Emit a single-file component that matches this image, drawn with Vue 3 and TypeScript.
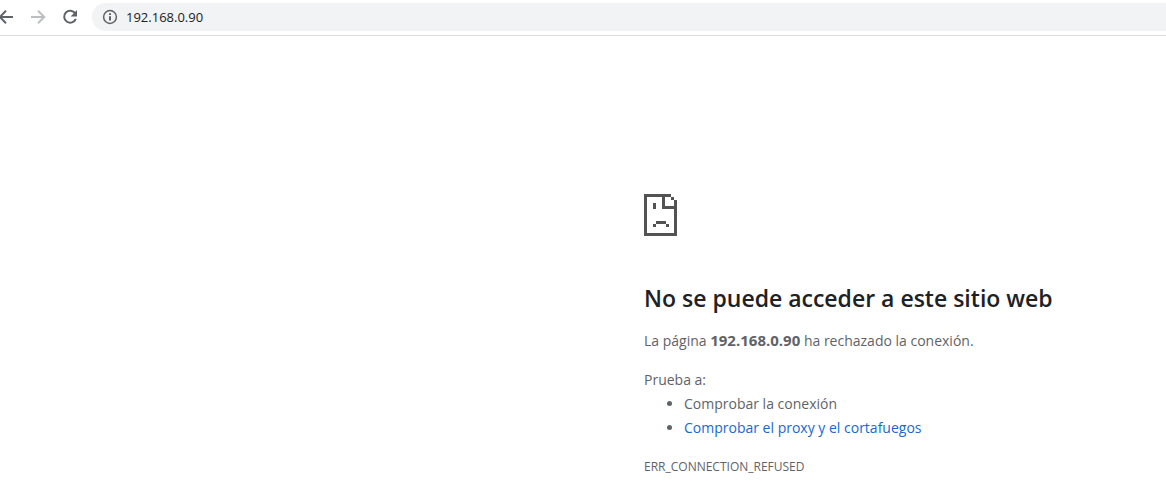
<script setup lang="ts">
import { ref } from 'vue'

const address = ref('192.168.0.90')
const host = '192.168.0.90'
</script>

<template>
  <div class="browser">
    <header class="toolbar">
      <button class="nav" type="button" aria-label="Atrás">
        <svg viewBox="0 0 16 16"><path d="M15 8H2M8 1.8L1.8 8L8 14.2" /></svg>
      </button>
      <button class="nav muted" type="button" aria-label="Adelante">
        <svg viewBox="0 0 16 16"><path d="M1 8H14M8 1.8L14.2 8L8 14.2" /></svg>
      </button>
      <button class="nav" type="button" aria-label="Volver a cargar">
        <svg viewBox="0 0 16 16">
          <path d="M13.2 4.4A6 6 0 1 0 13.8 9.8" />
          <path class="solid" d="M15 1V7.4H8.6Z" />
        </svg>
      </button>
      <div class="omnibox">
        <button class="info" type="button" aria-label="Información del sitio">
          <svg viewBox="0 0 16 16">
            <circle cx="8" cy="8" r="6.4" />
            <path class="mark" d="M8 7.2V11.6M8 4.2V6" />
          </svg>
        </button>
        <input v-model="address" class="address" type="text" aria-label="Dirección" spellcheck="false" />
      </div>
    </header>

    <main class="error">
      <svg class="sad" viewBox="0 0 33 42" aria-hidden="true">
        <path d="M0 0H27V3H21V12H33V15H18V3H3V39H30V15H33V42H0ZM27 3H30V6H27ZM30 6H33V12H30ZM9 9H12V15H9ZM12 27H22V30H12ZM9 30H12V33H9ZM22 30H25V33H22Z" />
      </svg>
      <h1>No se puede acceder a este sitio web</h1>
      <p>La página <strong>{{ host }}</strong> ha rechazado la conexión.</p>
      <p class="try">Prueba a:</p>
      <ul>
        <li>Comprobar la conexión</li>
        <li><a href="#proxy">Comprobar el proxy y el cortafuegos</a></li>
      </ul>
      <p class="code">ERR_CONNECTION_REFUSED</p>
    </main>
  </div>
</template>

<style>
body {
  background: #fff;
}
</style>

<style scoped>
.browser {
  font-family: "Segoe UI", "Open Sans", "Noto Sans", sans-serif;
  color: #5f6368;
  overflow: hidden;
}

.toolbar {
  display: flex;
  align-items: center;
  box-sizing: border-box;
  height: 36px;
  padding-bottom: 1px;
  border-bottom: 1px solid #dadce0;
}

button {
  flex: none;
  padding: 0;
  border: 0;
  background: none;
  color: #5f6368;
}

.nav {
  width: 16px;
  height: 16px;
  margin-right: 16px;
}

.nav:first-child {
  margin-left: -2px;
}

.nav.muted {
  color: #bcbec1;
}

button svg {
  display: block;
  width: 16px;
  height: 16px;
  fill: none;
  stroke: currentColor;
  stroke-width: 2;
}

button .solid {
  fill: currentColor;
  stroke: none;
}

.omnibox {
  display: flex;
  flex: 1;
  align-items: center;
  gap: 8px;
  height: 28px;
  margin-left: -2px;
  padding-left: 10px;
  border-radius: 14px 0 0 14px;
  background: #f1f3f4;
}

.info svg {
  stroke-width: 1.5;
}

.info .mark {
  stroke-width: 2;
}

.address {
  flex: 1;
  min-width: 0;
  padding: 0;
  border: 0;
  outline: 0;
  background: none;
  color: #202124;
  font: 13px/20px "Segoe UI", "Open Sans", "Noto Sans", sans-serif;
}

.error {
  max-width: 520px;
  margin-left: 644px;
  padding-top: 158px;
  font-size: 14px;
  line-height: 24px;
}

.sad {
  display: block;
  width: 33px;
  height: 42px;
  fill: #535353;
  shape-rendering: crispEdges;
}

h1 {
  margin: 48px 0 16px;
  color: #202124;
  font-size: 23px;
  font-weight: 550;
  line-height: 29px;
}

p {
  margin: 0;
}

strong {
  font-size: 15px;
  line-height: 20px;
}

.try {
  margin-top: 15px;
}

ul {
  margin: 0;
  padding-left: 40px;
}

a {
  color: #1967d2;
  text-decoration: none;
}

.code {
  margin-top: 15px;
  font-size: 12px;
}
</style>
